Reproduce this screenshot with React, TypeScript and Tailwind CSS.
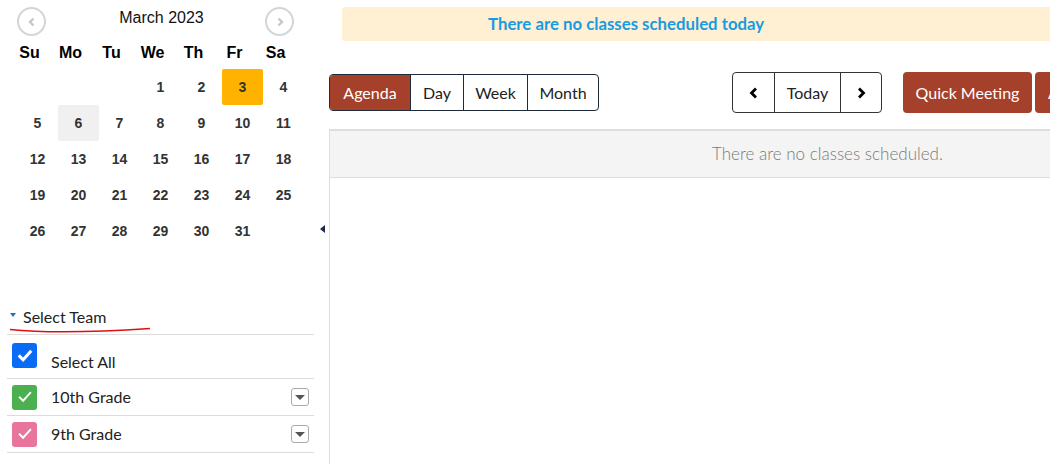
import React from 'react';

const weeks: (number | null)[][] = [
  [null, null, null, 1, 2, 3, 4],
  [5, 6, 7, 8, 9, 10, 11],
  [12, 13, 14, 15, 16, 17, 18],
  [19, 20, 21, 22, 23, 24, 25],
  [26, 27, 28, 29, 30, 31, null],
];

const teams = [
  { name: '10th Grade', color: 'bg-[#4caf50]' },
  { name: '9th Grade', color: 'bg-[#e8769c]' },
];

function Check({ bold }: { bold?: boolean }) {
  return (
    <svg viewBox="0 0 24 24" className="w-[18px] h-[18px]" fill="none" stroke="white" strokeWidth={bold ? 4 : 2.6} strokeLinecap="square">
      <path d="M5 12.5l4.5 4.5L19 6.5" />
    </svg>
  );
}

export default function App() {
  return (
    <div className="w-[1050px] h-[464px] overflow-hidden flex bg-white">
      {/* Sidebar */}
      <aside className="w-[329px] shrink-0 relative font-['Liberation_Sans',sans-serif]">
        <div className="pt-[7px] flex items-start">
          <button className="ml-[17px] shrink-0 w-[29px] h-[29px] rounded-full border-2 border-[#d3d6d9] flex items-center justify-center">
            <svg viewBox="0 0 10 10" className="w-[10px] h-[10px]" fill="none" stroke="#c4c8cc" strokeWidth={2.4}>
              <path d="M6.5 1.5L3 5l3.5 3.5" />
            </svg>
          </button>
          <div className="w-[219px] shrink-0 pl-[12px] text-center text-[16px] leading-[22px] text-[#111]">March 2023</div>
          <button className="shrink-0 w-[29px] h-[29px] rounded-full border-2 border-[#d3d6d9] flex items-center justify-center">
            <svg viewBox="0 0 10 10" className="w-[10px] h-[10px]" fill="none" stroke="#c4c8cc" strokeWidth={2.4}>
              <path d="M3.5 1.5L7 5 3.5 8.5" />
            </svg>
          </button>
        </div>

        <div className="grid grid-cols-[repeat(7,41px)] ml-[9px] mt-[7px] h-[20px] text-[16px] leading-[20px] font-bold text-black">
          {['Su', 'Mo', 'Tu', 'We', 'Th', 'Fr', 'Sa'].map((d) => (
            <div key={d} className="text-center">{d}</div>
          ))}
        </div>

        <div className="ml-[17px] mt-[6px]">
          {weeks.map((w, i) => (
            <div key={i} className="grid grid-cols-[repeat(7,41px)] h-[36px]">
              {w.map((d, j) => (
                <div
                  key={j}
                  className={
                    'flex items-center justify-center text-[14px] font-bold text-[#333] rounded-[2px] ' +
                    (d === 3 ? 'bg-[#ffb300]' : d === 6 ? 'bg-[#f0f0f0]' : '')
                  }
                >
                  {d}
                </div>
              ))}
            </div>
          ))}
        </div>

        {/* collapse arrow */}
        <div className="absolute right-[4px] top-[225px] w-0 h-0 border-y-[4.5px] border-y-transparent border-r-[5px] border-r-[#1c2b4a]" />

        {/* Team selector */}
        <div className="mt-[58px] font-['Lato',sans-serif]">
          <div className="flex items-center h-[20px]">
            <div className="ml-[10px] w-0 h-0 border-x-[3.5px] border-x-transparent border-t-[4px] border-t-[#2a6fb0] -translate-y-[2px]" />
            <span className="ml-[7px] text-[16px] text-[#222]">Select Team</span>
          </div>
          <svg width="160" height="7" className="block">
            <path d="M10 2.5 C 40 5.5, 90 5.5, 150 1.5" fill="none" stroke="#e01010" strokeWidth={1.6} />
          </svg>
          <div className="ml-[7px] w-[307px]">
            <div className="border-t border-[#dcdcdc] h-[44px] flex">
              <div className="ml-[5px] mt-[8px] w-[25px] h-[25px] rounded-[3px] bg-[#0a6cf5] flex items-center justify-center">
                <Check bold />
              </div>
              <span className="ml-[14px] mt-[16px] text-[16px] leading-[22px] text-[#222]">Select All</span>
            </div>
            {teams.map((t) => (
              <div key={t.name} className="border-t border-[#dcdcdc] h-[37px] flex items-center">
                <div className={'ml-[5px] w-[25px] h-[25px] rounded-[3px] flex items-center justify-center ' + t.color}>
                  <Check />
                </div>
                <span className="ml-[14px] text-[16px] text-[#222] flex-1">{t.name}</span>
                <div className="mr-[5px] w-[18px] h-[18px] rounded-[3px] border border-[#aaa] flex items-center justify-center">
                  <div className="w-0 h-0 border-x-[5px] border-x-transparent border-t-[5px] border-t-[#555]" />
                </div>
              </div>
            ))}
            <div className="border-t border-[#dcdcdc]" />
          </div>
        </div>
      </aside>

      {/* Main */}
      <main className="flex-1 min-w-0 font-['Lato',sans-serif]">
        <div className="ml-[13px] mt-[7px] h-[34px] w-[900px] bg-[#fff0d4] rounded-[3px] flex items-center pl-[146px]">
          <span className="text-[16.8px] font-bold text-[#1a9be0]">There are no classes scheduled today</span>
        </div>

        <div className="mt-[31px] h-[41px] flex items-center whitespace-nowrap">
          <div className="shrink-0 flex h-[37px] text-[16px] text-[#222] border border-[#1e2b38] rounded-[4px] overflow-hidden">
            <div className="w-[80px] shrink-0 bg-[#a5412a] text-white flex items-center justify-center">Agenda</div>
            <div className="w-[53px] shrink-0 border-l border-[#1e2b38] flex items-center justify-center">Day</div>
            <div className="w-[64px] shrink-0 border-l border-[#1e2b38] flex items-center justify-center">Week</div>
            <div className="w-[71px] shrink-0 border-l border-[#1e2b38] flex items-center justify-center">Month</div>
          </div>

          <div className="ml-[133px] shrink-0 flex h-[41px] text-[16px] text-[#222] border border-[#333] rounded-[4px] overflow-hidden">
            <div className="w-[41px] shrink-0 flex items-center justify-center">
              <svg viewBox="0 0 12 12" className="w-[12px] h-[12px]" fill="none" stroke="#000" strokeWidth={2.8}>
                <path d="M8 1.5L3.5 6 8 10.5" />
              </svg>
            </div>
            <div className="w-[67px] shrink-0 border-x border-[#333] flex items-center justify-center">Today</div>
            <div className="w-[40px] shrink-0 flex items-center justify-center">
              <svg viewBox="0 0 12 12" className="w-[12px] h-[12px]" fill="none" stroke="#000" strokeWidth={2.8}>
                <path d="M4 1.5L8.5 6 4 10.5" />
              </svg>
            </div>
          </div>

          <button className="ml-[21px] shrink-0 w-[129px] h-[41px] rounded-[4px] bg-[#a5412a] text-white text-[16px]">Quick Meeting</button>
          <button className="ml-[3px] shrink-0 w-[120px] h-[41px] rounded-[4px] bg-[#a5412a] text-white text-[16px] text-left pl-[13px]">Add Event</button>
        </div>

        <div className="mt-[16px] w-[996px] h-[400px] border-l border-t-2 border-[#dedede]">
          <div className="h-[47px] bg-[#f4f4f4] border-b border-[#dedede] flex items-center justify-center text-[17px] font-light text-[#7a7a7a]">
            There are no classes scheduled.
          </div>
        </div>
      </main>
    </div>
  );
}
